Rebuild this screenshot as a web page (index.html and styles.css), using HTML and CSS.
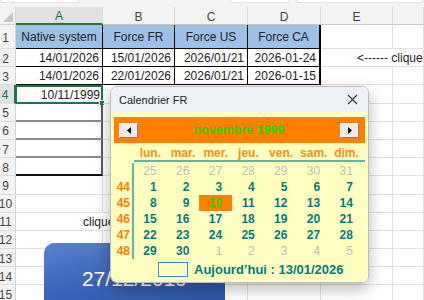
FILE: index.html
```html
<!DOCTYPE html>
<html lang="fr">
<head>
    <meta charset="UTF-8">
    <meta name="viewport" content="width=device-width, initial-scale=1.0">
    <title>Calendrier FR</title>
    <link rel="stylesheet" href="styles.css">
</head>
<body>
    <div class="window">
        <div class="toolbar">
            <span class="fx-box left"></span>
            <span class="fx-box mid"></span>
            <span class="fx-box right"></span>
        </div>

        <div class="sheet">
            <!-- column headers -->
            <div class="corner">
                <svg width="10" height="10" viewBox="0 0 10 10"><polygon points="10,0 10,10 0,10" fill="#c6c6c6"/></svg>
            </div>
            <div class="col-head active">A</div>
            <div class="col-head">B</div>
            <div class="col-head">C</div>
            <div class="col-head">D</div>
            <div class="col-head">E</div>
            <div class="col-head"></div>

            <!-- row 1 -->
            <div class="row-head">1</div>
            <div class="cell th">Native system</div>
            <div class="cell th">Force FR</div>
            <div class="cell th">Force US</div>
            <div class="cell th last">Force CA</div>
            <div class="cell"></div>
            <div class="cell"></div>

            <!-- row 2 -->
            <div class="row-head">2</div>
            <div class="cell td">14/01/2026</div>
            <div class="cell td">15/01/2026</div>
            <div class="cell td">2026/01/21</div>
            <div class="cell td last">2026-01-24</div>
            <div class="cell note">&lt;------ cliquez ici</div>
            <div class="cell"></div>

            <!-- row 3 -->
            <div class="row-head">3</div>
            <div class="cell td">14/01/2026</div>
            <div class="cell td">22/01/2026</div>
            <div class="cell td">2026/01/21</div>
            <div class="cell td last">2026-01-15</div>
            <div class="cell"></div>
            <div class="cell"></div>

            <!-- row 4 -->
            <div class="row-head active">4</div>
            <div class="cell td selected">10/11/1999<span class="handle"></span></div>
            <div class="cell"></div>
            <div class="cell"></div>
            <div class="cell"></div>
            <div class="cell"></div>
            <div class="cell"></div>

            <!-- rows 5 to 8 -->
            <div class="row-head">5</div>
            <div class="cell box"></div>
            <div class="cell"></div><div class="cell"></div><div class="cell"></div><div class="cell"></div><div class="cell"></div>

            <div class="row-head">6</div>
            <div class="cell box"></div>
            <div class="cell"></div><div class="cell"></div><div class="cell"></div><div class="cell"></div><div class="cell"></div>

            <div class="row-head">7</div>
            <div class="cell box"></div>
            <div class="cell"></div><div class="cell"></div><div class="cell"></div><div class="cell"></div><div class="cell"></div>

            <div class="row-head">8</div>
            <div class="cell box end"></div>
            <div class="cell"></div><div class="cell"></div><div class="cell"></div><div class="cell"></div><div class="cell"></div>

            <!-- rows 9 to 15 -->
            <div class="row-head">9</div>
            <div class="cell"></div><div class="cell"></div><div class="cell"></div><div class="cell"></div><div class="cell"></div><div class="cell"></div>

            <div class="row-head">10</div>
            <div class="cell"></div><div class="cell"></div><div class="cell"></div><div class="cell"></div><div class="cell"></div><div class="cell"></div>

            <div class="row-head">11</div>
            <div class="cell hint">cliquez ici</div>
            <div class="cell"></div><div class="cell"></div><div class="cell"></div><div class="cell"></div><div class="cell"></div>

            <div class="row-head">12</div>
            <div class="cell"></div><div class="cell"></div><div class="cell"></div><div class="cell"></div><div class="cell"></div><div class="cell"></div>

            <div class="row-head">13</div>
            <div class="cell"></div><div class="cell"></div><div class="cell"></div><div class="cell"></div><div class="cell"></div><div class="cell"></div>

            <div class="row-head">14</div>
            <div class="cell"></div><div class="cell"></div><div class="cell"></div><div class="cell"></div><div class="cell"></div><div class="cell"></div>

            <div class="row-head">15</div>
            <div class="cell"></div><div class="cell"></div><div class="cell"></div><div class="cell"></div><div class="cell"></div><div class="cell"></div>
        </div>

        <!-- shape button on the sheet -->
        <div class="shape">27/12/2019</div>

        <!-- userform -->
        <div class="dialog">
            <div class="title-bar">
                <span>Calendrier FR</span>
                <svg class="close" width="11" height="11" viewBox="0 0 11 11">
                    <path d="M1 1 L10 10 M10 1 L1 10" stroke="#333" stroke-width="1.1" fill="none"/>
                </svg>
            </div>
            <div class="dialog-body">
                <div class="month-bar">
                    <button class="nav"><svg width="4" height="7" viewBox="0 0 4 7"><polygon points="4,0 4,7 0,3.5" fill="#000"/></svg></button>
                    <span class="month">novembre 1999</span>
                    <button class="nav"><svg width="4" height="7" viewBox="0 0 4 7"><polygon points="0,0 0,7 4,3.5" fill="#000"/></svg></button>
                </div>

                <div class="dow">
                    <span>lun.</span><span>mar.</span><span>mer.</span><span>jeu.</span><span>ven.</span><span>sam.</span><span>dim.</span>
                </div>

                <div class="month-grid">
                    <div class="weeks">
                        <span></span><span>44</span><span>45</span><span>46</span><span>47</span><span>48</span>
                    </div>
                    <div class="days">
                        <span class="out">25</span><span class="out">26</span><span class="out">27</span><span class="out">28</span><span class="out">29</span><span class="out">30</span><span class="out">31</span>
                        <span>1</span><span>2</span><span>3</span><span>4</span><span>5</span><span>6</span><span>7</span>
                        <span>8</span><span>9</span><span class="current">10</span><span>11</span><span>12</span><span>13</span><span>14</span>
                        <span>15</span><span>16</span><span>17</span><span>18</span><span>19</span><span>20</span><span>21</span>
                        <span>22</span><span>23</span><span>24</span><span>25</span><span>26</span><span>27</span><span>28</span>
                        <span>29</span><span>30</span><span class="out">1</span><span class="out">2</span><span class="out">3</span><span class="out">4</span><span class="out">5</span>
                    </div>
                </div>

                <div class="today">
                    <span class="today-box"></span>
                    <span>Aujourd’hui : 13/01/2026</span>
                </div>
            </div>
        </div>
    </div>
</body>
</html>
```

FILE: styles.css
```css
* {
    margin: 0;
    padding: 0;
    box-sizing: border-box;
}

body {
    width: 424px;
    height: 300px;
    overflow: hidden;
    background: #fff;
    font-family: 'Liberation Sans', Arial, sans-serif;
}

.window {
    position: relative;
    width: 424px;
    height: 300px;
    overflow: hidden;
}

/* formula bar remains */
.toolbar {
    height: 7px;
    background: #f3f3f3;
    display: flex;
    gap: 6px;
}

.fx-box {
    height: 3px;
    background: #fff;
    border: 1px solid #e3e3e3;
    border-top: none;
    border-radius: 0 0 3px 3px;
}

.fx-box.left { width: 80px; }
.fx-box.mid { width: 60px; margin-left: 144px; }
.fx-box.right { flex: 1; }

/* sheet grid */
.sheet {
    display: grid;
    grid-template-columns: 16px 87px 72px 73px 73px 72px 1fr;
    grid-template-rows: 18px 24px repeat(14, 18.2px);
    font-size: 12px;
    color: #222;
    overflow: hidden;
}

.corner {
    background: #f3f3f3;
    border-right: 1px solid #d4d4d4;
    border-bottom: 1px solid #d4d4d4;
    display: flex;
    align-items: flex-end;
    justify-content: flex-end;
    padding: 0 2px 2px 0;
}

.col-head {
    background: #f3f3f3;
    border-right: 1px solid #d9d9d9;
    border-bottom: 1px solid #c8c8c8;
    color: #444;
    font-size: 12px;
    display: flex;
    align-items: center;
    justify-content: center;
    padding-top: 2px;
}

.col-head.active {
    background: #e1e1e1;
    color: #217346;
    border-bottom: 2px solid #217346;
}

.row-head {
    background: #f3f3f3;
    border-right: 1px solid #d4d4d4;
    border-bottom: 1px solid #dcdcdc;
    color: #444;
    font-size: 12px;
    display: flex;
    align-items: center;
    justify-content: center;
    padding-right: 4px;
    padding-top: 2px;
}

.row-head.active {
    background: #e1e1e1;
    color: #217346;
    border-right: 2px solid #217346;
}

.cell {
    position: relative;
    border-right: 1px solid #e1e1e1;
    border-bottom: 1px solid #e1e1e1;
    display: flex;
    align-items: center;
    padding: 1px 3px 0;
    white-space: nowrap;
    min-width: 0;
}

.th {
    background: #9bc2e6;
    justify-content: center;
    border-right-color: #000;
    border-bottom-color: #000;
}

.td {
    justify-content: flex-end;
    border-right-color: #000;
    border-bottom-color: #000;
}

.last {
    border-right: 2px solid #000;
}

.note {
    border-right: none;
    padding-left: 36px;
}

.hint {
    border-right: none;
    padding-left: 67px;
}

.selected {
    border: 2px solid #217346;
    border-left-width: 1px;
    padding-right: 1px;
}

.handle {
    position: absolute;
    right: -4px;
    bottom: -4px;
    width: 6px;
    height: 6px;
    background: #217346;
    border: 1px solid #fff;
}

.box {
    border-right: 2px solid #5a5a5a;
    border-bottom: 2px solid #8a8a8a;
}

.box.end {
    border-bottom: 2px solid #111;
}

/* the blue shape under the form */
.shape {
    position: absolute;
    left: 44px;
    top: 243px;
    width: 181px;
    height: 70px;
    border-radius: 10px 10px 0 0;
    background: linear-gradient(165deg, #5a84cf 0%, #3a64b6 45%, #2c54a6 100%);
    color: #fff;
    font-size: 21px;
    text-align: center;
    padding-top: 24px;
    line-height: 24px;
}

/* userform */
.dialog {
    position: absolute;
    left: 110px;
    top: 86px;
    width: 259px;
    height: 197px;
    border: 1px solid #b9bcc2;
    border-radius: 7px;
    overflow: hidden;
    box-shadow: 0 6px 16px rgba(0, 0, 0, 0.28);
    display: flex;
    flex-direction: column;
}

.title-bar {
    height: 25px;
    background: #eef1f6;
    display: flex;
    align-items: center;
    justify-content: space-between;
    padding: 0 10px 0 8px;
    font-size: 11px;
    color: #222;
}

.dialog-body {
    flex: 1;
    background: #ffffc0;
    padding: 5px 3px 0;
}

.month-bar {
    height: 26px;
    background: #ff8000;
    display: flex;
    align-items: center;
    justify-content: space-between;
    padding: 0 6px 0 5px;
}

.nav {
    width: 19px;
    height: 15px;
    background: #ececec;
    border: 1px solid;
    border-color: #fff #808080 #808080 #fff;
    display: flex;
    align-items: center;
    justify-content: center;
}

.month {
    color: #33cc00;
    font-weight: bold;
    font-size: 12.5px;
}

.dow {
    display: grid;
    grid-template-columns: repeat(7, 32.7px);
    margin: 4px 0 0 20px;
    height: 15px;
    border-bottom: 2px solid #5cb8a0;
    color: #ff8c1a;
    font-weight: bold;
    font-size: 12px;
    text-align: center;
    line-height: 13px;
}

.month-grid {
    display: flex;
    margin-top: 1px;
}

.weeks {
    width: 20px;
    border-right: 2px solid #5cb8a0;
    display: grid;
    grid-template-rows: repeat(6, 16px);
    color: #ff8000;
    font-weight: bold;
    font-size: 12px;
    text-align: right;
    padding-right: 2px;
}

.weeks span,
.days span {
    line-height: 16px;
}

.days {
    display: grid;
    grid-template-columns: repeat(7, 32.7px);
    grid-template-rows: repeat(6, 16px);
    color: #007b7b;
    font-weight: bold;
    font-size: 12px;
    text-align: right;
}

.days span {
    padding-right: 10px;
}

.days .out {
    color: #bdbdbd;
    font-weight: normal;
}

.days .current {
    background: #ff8000;
    color: #33cc00;
    text-align: center;
    padding-right: 0;
}

.today {
    display: flex;
    align-items: center;
    gap: 6px;
    height: 15px;
    margin-top: 3px;
    padding-left: 44px;
    color: #007b7b;
    font-weight: bold;
    font-size: 13px;
}

.today-box {
    width: 30px;
    height: 15px;
    border: 1px solid #3a86d8;
}
```
